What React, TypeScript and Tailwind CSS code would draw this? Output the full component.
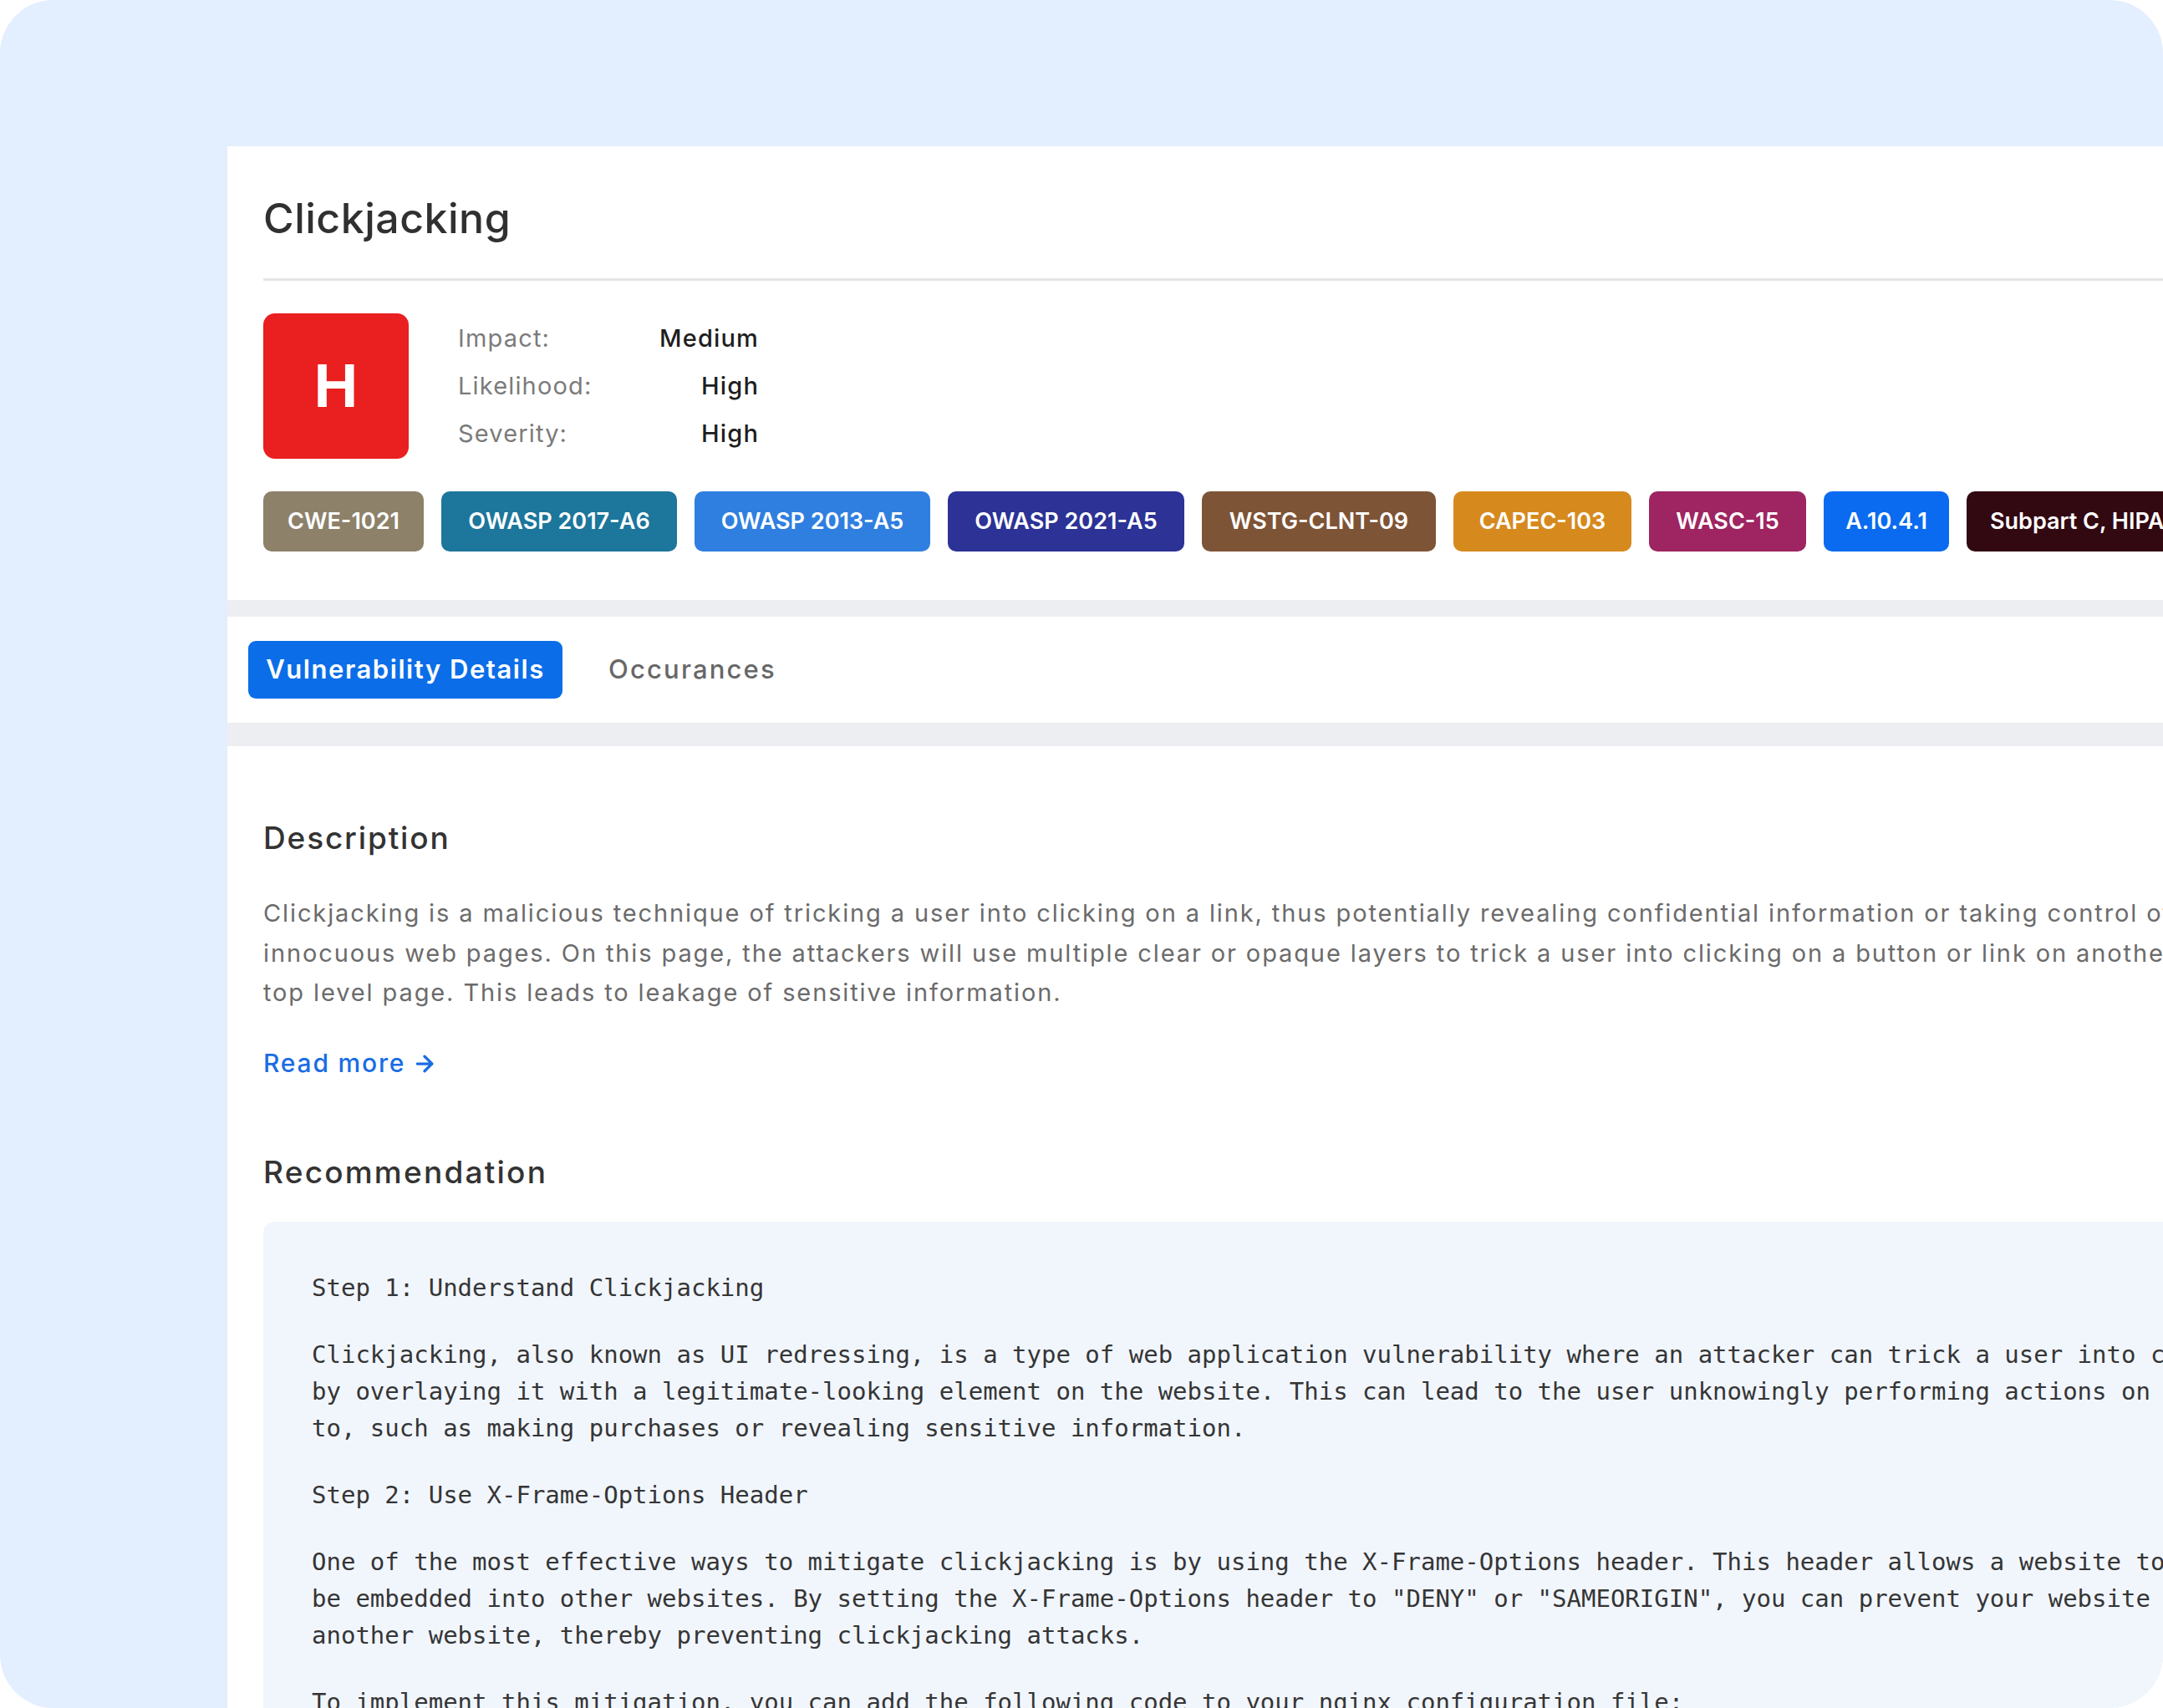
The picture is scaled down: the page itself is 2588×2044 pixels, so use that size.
import { ArrowRight } from 'lucide-react';

const tags = [
  { label: 'CWE-1021', cls: 'w-[192px] bg-[#8d816a]' },
  { label: 'OWASP 2017-A6', cls: 'w-[282px] bg-[#1d769b]' },
  { label: 'OWASP 2013-A5', cls: 'w-[282px] bg-[#2f7fe0]' },
  { label: 'OWASP 2021-A5', cls: 'w-[283px] bg-[#2c3296]' },
  { label: 'WSTG-CLNT-09', cls: 'w-[280px] bg-[#7e5436]' },
  { label: 'CAPEC-103', cls: 'w-[213px] bg-[#d68a1e]' },
  { label: 'WASC-15', cls: 'w-[188px] bg-[#9e2561]' },
  { label: 'A.10.4.1', cls: 'w-[150px] bg-[#0b6bf0]' },
  { label: 'Subpart C, HIPAA Security Rule', cls: 'px-[28px] bg-[#320811]' },
];

const ratings = [
  { label: 'Impact:', value: 'Medium' },
  { label: 'Likelihood:', value: 'High' },
  { label: 'Severity:', value: 'High' },
];

const description = [
  'Clickjacking is a malicious technique of tricking a user into clicking on a link, thus potentially revealing confidential information or taking control of their computer while clicking on seemingly',
  'innocuous web pages. On this page, the attackers will use multiple clear or opaque layers to trick a user into clicking on a button or link on another page when they were intending to click on the',
  'top level page. This leads to leakage of sensitive information.',
];

// recommendation text, one array per paragraph, one string per line
const recommendation = [
  ['Step 1: Understand Clickjacking'],
  [
    'Clickjacking, also known as UI redressing, is a type of web application vulnerability where an attacker can trick a user into clicking on a hidden element',
    'by overlaying it with a legitimate-looking element on the website. This can lead to the user unknowingly performing actions on the website that they did not intend',
    'to, such as making purchases or revealing sensitive information.',
  ],
  ['Step 2: Use X-Frame-Options Header'],
  [
    'One of the most effective ways to mitigate clickjacking is by using the X-Frame-Options header. This header allows a website to control whether its pages can',
    'be embedded into other websites. By setting the X-Frame-Options header to "DENY" or "SAMEORIGIN", you can prevent your website from being embedded in',
    'another website, thereby preventing clickjacking attacks.',
  ],
  ['To implement this mitigation, you can add the following code to your nginx configuration file:'],
  ['add_header X-Frame-Options "SAMEORIGIN";'],
];

function SummaryCard() {
  return (
    <div className="shrink-0 bg-white pl-[43px] pt-[57px] pb-[58px]">
      <h1 className="text-[50px] leading-[58px] font-medium text-[#303030] tracking-[0.01em]">Clickjacking</h1>
      <div className="mt-[43px] h-[3px] bg-[#e4e5e7]" />

      <div className="mt-[39px] flex items-center">
        <div className="w-[174px] h-[174px] rounded-[14px] bg-[#ea2020] flex items-center justify-center">
          <span className="text-white text-[70px] font-bold leading-none">H</span>
        </div>
        <div className="ml-[59px] flex flex-col">
          {ratings.map((r) => (
            <div key={r.label} className="flex items-center h-[57px] text-[29px] tracking-[0.04em]">
              <span className="w-[230px] text-[#7b7b7b]">{r.label}</span>
              <span className="w-[130px] text-right font-medium text-[#1e1e1e]">{r.value}</span>
            </div>
          ))}
        </div>
      </div>

      <div className="mt-[39px] flex gap-[21px]">
        {tags.map((t) => (
          <span
            key={t.label}
            className={`${t.cls} shrink-0 h-[72px] rounded-[10px] flex items-center justify-center text-white text-[27px] font-semibold whitespace-nowrap`}
          >
            {t.label}
          </span>
        ))}
      </div>
    </div>
  );
}

function TabsCard() {
  return (
    <div className="shrink-0 mt-[20px] bg-white h-[127px] pl-[25px] flex items-center gap-[55px]">
      <button className="h-[69px] w-[376px] rounded-[9px] bg-[#0b6ee8] text-white text-[31px] font-semibold tracking-[0.05em]">
        Vulnerability Details
      </button>
      <button className="text-[31px] font-medium text-[#676767] tracking-[0.07em]">Occurances</button>
    </div>
  );
}

function DetailsCard() {
  return (
    <div className="shrink-0 mt-[28px] bg-white pl-[43px] pt-[85px] flex-1">
      <h2 className="text-[37px] leading-[50px] font-medium text-[#333] tracking-[0.05em]">Description</h2>
      <p className="mt-[41px] text-[29px] leading-[47.5px] text-[#6b6b6b] tracking-[0.065em]">
        {description.map((line) => (
          <span key={line} className="block whitespace-nowrap">
            {line}
          </span>
        ))}
      </p>
      <a className="mt-[39px] h-[44px] flex items-center gap-[8px] text-[30px] font-medium text-[#1a6de3] tracking-[0.06em]">
        Read more
        <ArrowRight size={30} strokeWidth={2.6} />
      </a>

      <h2 className="mt-[83px] text-[37px] leading-[50px] font-medium text-[#333] tracking-[0.06em]">Recommendation</h2>
      <div className="mt-[34px] rounded-[14px] bg-[#f1f6fd] pl-[58px] pt-[57px] pb-[60px] [font-family:'DejaVu_Sans_Mono',monospace] text-[29px] leading-[44px] text-[#353535] flex flex-col gap-[36px]">
        {recommendation.map((block, i) => (
          <div key={i}>
            {block.map((line) => (
              <div key={line} className="whitespace-pre">
                {line}
              </div>
            ))}
          </div>
        ))}
      </div>
    </div>
  );
}

export default function App() {
  return (
    <div className="w-[2588px] h-[2044px] bg-white overflow-hidden [font-family:Inter,sans-serif]">
      <div className="w-full h-full rounded-[64px] bg-[#e3eefe] overflow-hidden pl-[272px] pt-[175px]">
        <div className="w-[2400px] h-full bg-[#edeef1] flex flex-col">
          <SummaryCard />
          <TabsCard />
          <DetailsCard />
        </div>
      </div>
    </div>
  );
}
